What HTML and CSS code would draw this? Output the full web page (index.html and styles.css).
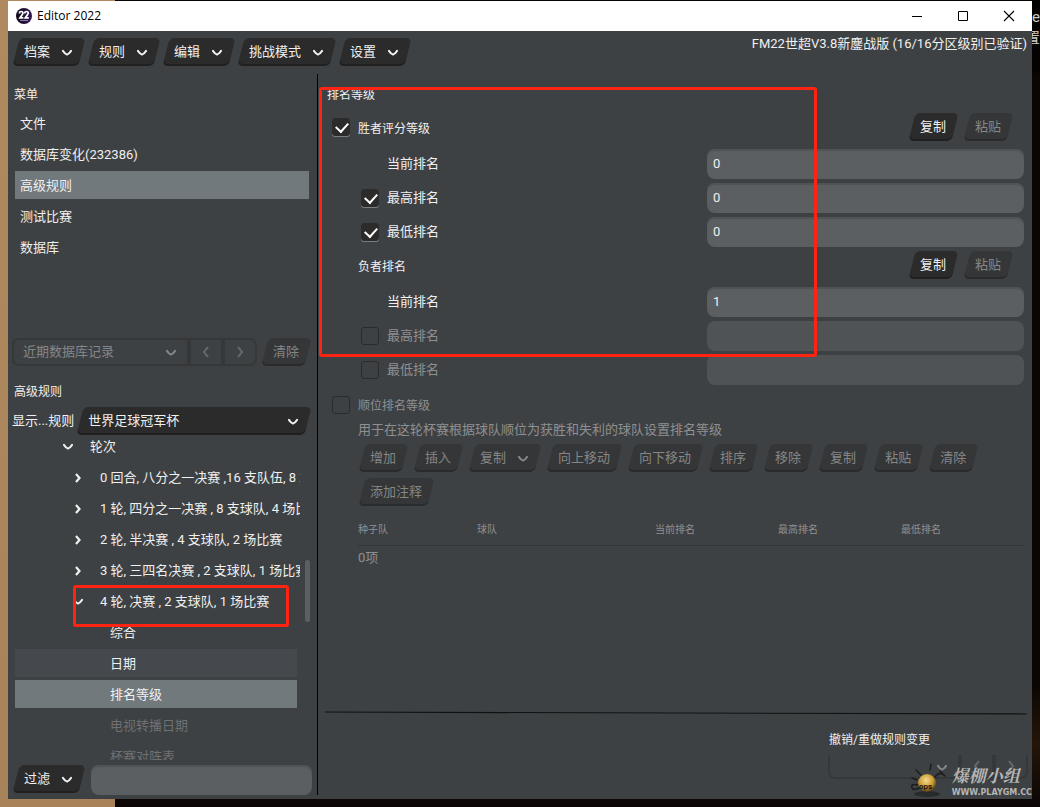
FILE: index.html
```html
<!DOCTYPE html>
<html lang="zh-CN">
<head>
<meta charset="utf-8">
<title>Editor 2022</title>
<link rel="stylesheet" href="styles.css">
</head>
<body>
<svg class="defs" aria-hidden="true">
  <symbol id="down" viewBox="0 0 12 12"><path d="M2 4 Q4 7 6 7.5 Q8 7 10 4" fill="none" stroke="currentColor" stroke-width="2.2" stroke-linecap="round"/></symbol>
  <symbol id="right" viewBox="0 0 12 12"><path d="M4 2 L7.5 6 L4 10" fill="none" stroke="currentColor" stroke-width="2.2"/></symbol>
  <symbol id="left" viewBox="0 0 12 12"><path d="M8 1 L4 6 L8 11" fill="none" stroke="currentColor" stroke-width="2"/></symbol>
  <symbol id="next" viewBox="0 0 12 12"><path d="M4 1 L8 6 L4 11" fill="none" stroke="currentColor" stroke-width="2"/></symbol>
</svg>
<div class="desktop">
  <span class="behind behind-a">e</span>
  <span class="behind behind-b">置</span>
  <div class="window">
    <header class="titlebar">
      <svg class="logo" viewBox="0 0 16 16"><defs><linearGradient id="lg"><stop offset="0" stop-color="#0c0914"/><stop offset="1" stop-color="#35185a"/></linearGradient></defs><circle cx="8" cy="8" r="8" fill="url(#lg)"/><path d="M3.500 5.500V4.500Q3.500 3.500 5.200 3.500T7 4.800Q7 6 4 9.800H7.300M8.800 5.500V4.500Q8.800 3.500 10.500 3.500T12.300 4.800Q12.300 6 9.300 9.800H12.800" fill="none" stroke="#fff" stroke-width="1.700"/><path d="M4 12.500H12" stroke="#8d7aa6" stroke-width="1"/></svg>
      <h1 class="app-name">Editor 2022</h1>
      <button class="win-btn" aria-label="最小化"><svg viewBox="0 0 12 12"><path d="M1 6.500H11" stroke="#000"/></svg></button>
      <button class="win-btn" aria-label="最大化"><svg viewBox="0 0 12 12"><path d="M1.500 1.500H10.500V10.500H1.500Z" fill="none" stroke="#000"/></svg></button>
      <button class="win-btn" aria-label="关闭"><svg viewBox="0 0 12 12"><path d="M1 1L11 11M11 1L1 11" stroke="#000" stroke-width="1.100"/></svg></button>
    </header>

    <nav class="menubar">
      <button class="btn">档案<svg class="chev"><use href="#down"/></svg></button>
      <button class="btn">规则<svg class="chev"><use href="#down"/></svg></button>
      <button class="btn">编辑<svg class="chev"><use href="#down"/></svg></button>
      <button class="btn">挑战模式<svg class="chev"><use href="#down"/></svg></button>
      <button class="btn">设置<svg class="chev"><use href="#down"/></svg></button>
      <span class="db-name">FM22世超V3.8新鏖战版 (16/16分区级别已验证)</span>
    </nav>

    <div class="main">
      <aside class="side">
        <h2 class="heading">菜单</h2>
        <ul class="menu">
          <li class="item">文件</li>
          <li class="item">数据库变化(232386)</li>
          <li class="item selected">高级规则</li>
          <li class="item">测试比赛</li>
          <li class="item">数据库</li>
        </ul>
        <div class="recent">
          <div class="group">
            <div class="group-select"><select disabled aria-label="近期数据库记录"><option>近期数据库记录</option></select><svg class="chev"><use href="#down"/></svg></div>
            <button class="step" disabled aria-label="后退"><svg class="chev"><use href="#left"/></svg></button>
            <button class="step" disabled aria-label="前进"><svg class="chev"><use href="#next"/></svg></button>
          </div>
          <button class="btn" disabled>清除</button>
        </div>
        <h2 class="heading">高级规则</h2>
        <div class="rule-row">
          <label for="rule">显示...规则</label>
          <div class="btn rule-select"><select id="rule"><option>世界足球冠军杯</option></select><svg class="chev"><use href="#down"/></svg></div>
        </div>
        <div class="tree-pane">
          <ul class="tree">
            <li class="node root"><svg class="chev"><use href="#down"/></svg>轮次</li>
            <li class="node round"><svg class="chev"><use href="#right"/></svg>0 回合, 八分之一决赛 ,16 支队伍, 8 场比赛</li>
            <li class="node round"><svg class="chev"><use href="#right"/></svg>1 轮, 四分之一决赛 , 8 支球队, 4 场比赛</li>
            <li class="node round"><svg class="chev"><use href="#right"/></svg>2 轮, 半决赛 , 4 支球队, 2 场比赛</li>
            <li class="node round"><svg class="chev"><use href="#right"/></svg>3 轮, 三四名决赛 , 2 支球队, 1 场比赛</li>
            <li class="node round"><svg class="chev"><use href="#down"/></svg>4 轮, 决赛 , 2 支球队, 1 场比赛</li>
            <li class="node leaf">综合</li>
            <li class="node leaf hover">日期</li>
            <li class="node leaf selected">排名等级</li>
            <li class="node leaf dim">电视转播日期</li>
            <li class="node leaf dim">杯赛对阵表</li>
          </ul>
          <div class="track"><div class="thumb"></div></div>
        </div>
        <div class="filter">
          <button class="btn">过滤<svg class="chev"><use href="#down"/></svg></button>
          <input class="field" type="text" aria-label="过滤">
        </div>
      </aside>

      <section class="content">
        <h2 class="heading">排名等级</h2>
        <div class="group-head">
          <input class="check" type="checkbox" id="win" checked><label class="small" for="win">胜者评分等级</label>
          <div class="actions"><button class="btn">复制</button><button class="btn" disabled>粘贴</button></div>
        </div>
        <div class="rows">
          <div class="row"><label for="w1">当前排名</label><input class="field" id="w1" type="text" value="0"></div>
          <div class="row"><input class="check" type="checkbox" id="wc2" checked><label for="wc2">最高排名</label><input class="field" type="text" value="0" aria-label="最高排名"></div>
          <div class="row"><input class="check" type="checkbox" id="wc3" checked><label for="wc3">最低排名</label><input class="field" type="text" value="0" aria-label="最低排名"></div>
        </div>
        <div class="group-head second">
          <span class="small">负者排名</span>
          <div class="actions"><button class="btn">复制</button><button class="btn" disabled>粘贴</button></div>
        </div>
        <div class="rows">
          <div class="row"><label for="l1">当前排名</label><input class="field" id="l1" type="text" value="1"></div>
          <div class="row off"><input class="check" type="checkbox" id="lc2"><label for="lc2">最高排名</label><input class="field" type="text" aria-label="最高排名" disabled></div>
          <div class="row off"><input class="check" type="checkbox" id="lc3"><label for="lc3">最低排名</label><input class="field" type="text" aria-label="最低排名" disabled></div>
        </div>
        <div class="order off">
          <div class="order-head"><input class="check" type="checkbox" id="seq"><label class="small" for="seq">顺位排名等级</label></div>
          <p class="note">用于在这轮杯赛根据球队顺位为获胜和失利的球队设置排名等级</p>
          <div class="tools">
            <button class="btn" disabled>增加</button>
            <button class="btn" disabled>插入</button>
            <button class="btn" disabled>复制<svg class="chev"><use href="#down"/></svg></button>
            <button class="btn" disabled>向上移动</button>
            <button class="btn" disabled>向下移动</button>
            <button class="btn" disabled>排序</button>
            <button class="btn" disabled>移除</button>
            <button class="btn" disabled>复制</button>
            <button class="btn" disabled>粘贴</button>
            <button class="btn" disabled>清除</button>
            <button class="btn" disabled>添加注释</button>
          </div>
          <table class="seeds">
            <thead><tr><th class="c-seed">种子队</th><th>球队</th><th class="c-rank">当前排名</th><th class="c-rank">最高排名</th><th class="c-rank">最低排名</th></tr></thead>
            <tbody><tr><td colspan="5">0项</td></tr></tbody>
          </table>
        </div>
        <footer class="undo">
          <svg class="rule" viewBox="0 0 702 4" preserveAspectRatio="none"><path d="M0 1L702 3" stroke="#111" stroke-width="1.200"/></svg>
          <div class="undo-box">
            <h2 class="small undo-title">撤销/重做规则变更</h2>
            <div class="group open">
              <div class="group-select"><select disabled aria-label="撤销/重做规则变更"><option></option></select><svg class="chev"><use href="#down"/></svg></div>
              <button class="step" disabled aria-label="撤销"><svg class="chev"><use href="#left"/></svg></button>
              <button class="step" disabled aria-label="重做"><svg class="chev"><use href="#next"/></svg></button>
            </div>
          </div>
        </footer>
      </section>
    </div>
  </div>
  <div class="mark mark-ranks"></div>
  <div class="mark mark-round"></div>
  <div class="stamp">
    <svg class="bomb" viewBox="0 0 38 36">
      <defs><radialGradient id="ball" cx=".45" cy=".35" r=".65"><stop offset="0" stop-color="#f7dc8c"/><stop offset=".6" stop-color="#c99a34"/><stop offset="1" stop-color="#4d3a15"/></radialGradient></defs>
      <ellipse cx="17" cy="31" rx="13" ry="3" fill="#1b1d1e" opacity=".6"/>
      <g stroke="#1c1c1c" stroke-width="1.500" stroke-linecap="round" fill="none"><path d="M6 7L11 12M20 7L21 1M2 15L7 17M25 14Q28 9 33 11M30 8L35 13M9 22Q0 20 2 25Q4 28 9 25"/></g>
      <circle cx="17" cy="20" r="9" fill="url(#ball)"/>
      <text class="bomb-text" x="9" y="26">ops</text>
    </svg>
    <div class="stamp-text"><span class="stamp-cn">爆棚小组</span><span class="stamp-url">WWW.PLAYGM.CC</span></div>
  </div>
</div>
</body>
</html>
```
FILE: styles.css
```css
* { box-sizing: border-box; }
body {
  margin: 0;
  font: 13px/20px Roboto, "Noto Sans CJK SC", sans-serif;
  color: #f0f0f0;
}
h1, h2, p, ul { margin: 0; padding: 0; font: inherit; list-style: none; }
button, select, input { font: inherit; color: inherit; }
.defs { position: absolute; width: 0; height: 0; }

.desktop {
  position: relative;
  height: 100vh;
  min-height: 760px;
  padding: 1px 8px 8px;
  overflow: hidden;
  background:
    linear-gradient(#b08a5e, #a8835a) left bottom / 115px 100% no-repeat,
    linear-gradient(#040302 0 70px, #0b0603 76px 85%, #241509 92%, #0b0505);
}
.behind { position: absolute; right: 0; width: 8px; overflow: hidden; color: #ccc; font-size: 15px; }
.behind-a { top: 7px; }
.behind-b { top: 28px; direction: rtl; }

.window {
  position: relative;
  display: flex;
  flex-direction: column;
  height: 100%;
  background: #3e4143;
}
.titlebar {
  display: flex;
  align-items: center;
  height: 30px;
  padding-left: 8px;
  background: #fff;
  color: #000;
}
.logo { width: 16px; height: 16px; margin-right: 5px; }
.app-name { flex: 1; font: 12px/20px "Open Sans", sans-serif; }
.win-btn { width: 46px; height: 30px; padding: 0; border: 0; background: none; }
.win-btn svg { display: block; width: 12px; height: 12px; margin: 0 auto; }

.menubar { display: flex; gap: 5px; padding: 7px 5px 8px 6px; }
.db-name { margin-left: auto; line-height: 12px; white-space: nowrap; }

.btn {
  position: relative;
  z-index: 0;
  display: flex;
  align-items: center;
  height: 28px;
  padding: 0 11px 1px 10px;
  border: 0;
  background: none;
  white-space: nowrap;
}
.btn::before {
  content: "";
  position: absolute;
  z-index: -1;
  inset: 0 2px;
  border-radius: 5px;
  background: #2b2b2b;
  box-shadow: inset 0 -2px #202020;
  transform: skewX(-14deg);
}
.btn:disabled { color: #858687; }
.btn:disabled::before { background: #353637; box-shadow: inset 0 -2px #2a2b2c; }
.chev { flex: none; width: 12px; height: 12px; }
.btn > .chev { margin: 2px 0 0 11px; }

.main { display: flex; flex: 1; min-height: 0; }
.side {
  display: flex;
  flex-direction: column;
  width: 310px;
  margin-bottom: 4px;
  padding-top: 10px;
  border-right: 1px solid #000;
}
.heading { padding: 1px 0 0 6px; font-size: 12px; }
.menu { display: grid; gap: 3px; padding: 4px 8px 0 7px; }
.item { height: 28px; padding: 1px 0 0 5px; line-height: 28px; }
.selected { background: #71797c; }
.recent { display: flex; gap: 6px; margin: 77px 7px 15px 4px; }
.group {
  display: flex;
  flex: 1;
  height: 28px;
  border: 2px solid #353738;
  border-radius: 7px;
  color: #858687;
}
.group-select { position: relative; display: flex; flex: 1; align-items: center; }
.group-select select { flex: 1; width: 0; padding: 0 0 1px 9px; }
.group-select .chev { position: absolute; right: 10px; top: 7px; }
select { height: 100%; border: 0; padding: 0; background: none; appearance: none; outline: 0; }
select:disabled { opacity: 1; color: #858687; }
.step { width: 34px; padding: 0; border: 0; border-left: 4px solid #353738; background: none; color: #68696a; }
.step .chev { display: block; margin: 0 auto; }

.rule-row { display: flex; align-items: center; gap: 4px; padding: 5px 7px 0 4px; }
.rule-row label { white-space: nowrap; }
.rule-select { flex: 1; }
.rule-select select { flex: 1; width: 0; }

.tree-pane { display: flex; flex: 1; min-height: 0; margin: 0 7px 5px; overflow: hidden; }
.tree { flex: 1; width: 0; overflow: hidden; }
.node {
  display: flex;
  align-items: center;
  height: 28px;
  margin: 0 3px 3px 0;
  padding-top: 1px;
  white-space: nowrap;
}
.root { height: 25px; padding: 0 0 2px 47px; gap: 16px; }
.round { padding-left: 57px; gap: 16px; }
.leaf { padding-left: 95px; }
.hover { background: #45484c; }
.dim { color: #6e7072; }
.track { width: 10px; padding: 125px 0 0 5px; }
.thumb { width: 5px; height: 62px; border-radius: 3px; background: #5c5f61; }
.filter { display: flex; gap: 7px; padding: 0 5px 0 6px; }

.field {
  flex: 1;
  width: 0;
  height: 30px;
  padding: 0 6px 2px;
  border: 0;
  border-radius: 8px;
  background: #5c5f61;
  box-shadow: inset 0 2px 1px #505355;
}
.field:disabled { background: #505355; box-shadow: none; }

.content { display: flex; flex: 1; flex-direction: column; min-width: 0; padding: 10px 8px 0 14px; }
.content > .heading { padding: 1px 0 0; margin-left: -5px; }
.small { font-size: 12px; }
.group-head { display: flex; align-items: center; gap: 8px; height: 28px; margin-top: 8px; }
.group-head .small { padding-top: 4px; }
.second { margin-top: 4px; padding-left: 26px; }
.actions { display: flex; gap: 8px; margin: 0 12px 0 auto; }
.check {
  flex: none;
  display: block;
  width: 18px;
  height: 18px;
  margin: 0;
  border: 1px solid #2b2b2b;
  border-radius: 3px;
  background: transparent;
  appearance: none;
}
.check:checked { background: #2b2b2b; box-shadow: 0 1px #7c7e7f; }
.check:checked::before {
  content: "";
  display: block;
  width: 6px;
  height: 10px;
  margin: 1px 0 0 5px;
  border: solid #fff;
  border-width: 0 2px 2px 0;
  transform: rotate(42deg);
}
.rows { display: grid; gap: 4px; margin-top: 8px; }
.row {
  display: grid;
  grid-template-columns: 18px minmax(0, 312fr) minmax(0, 317fr);
  align-items: center;
  column-gap: 8px;
  padding-left: 29px;
}
.row label { grid-column: 2; }
.row .field { width: 100%; }
.off { color: #8f9091; }

.order { padding: 9px 0 0; }
.order-head { display: flex; align-items: center; gap: 8px; }
.order-head .small { padding-top: 2px; }
.note { margin: 4px 0 4px 26px; }
.tools { display: flex; flex-wrap: wrap; gap: 6px 8px; padding-left: 28px; }
.seeds { width: calc(100% - 26px); margin: 11px 0 0 26px; border-collapse: collapse; table-layout: fixed; }
.seeds th { height: 28px; padding: 0 0 2px; border-bottom: 1px solid #333637; font-size: 10px; font-weight: 400; text-align: left; }
.seeds td { height: 26px; padding: 0; }
.c-seed { width: 119px; }
.c-rank { width: 123px; }

.undo { margin-top: auto; padding-bottom: 20px; }
.rule { display: block; width: calc(100% + 10px); height: 4px; margin-left: -7px; }
.undo-box { width: 200px; margin: 15px -4px 0 auto; }
.undo-title { padding-left: 1px; }
.open { height: 24px; margin-top: 5px; border-top: 0; border-radius: 0 0 7px 7px; }

.mark { position: absolute; border: 3px solid #ff2312; border-radius: 3px; }
.mark-ranks { left: 319px; top: 87px; width: 498px; height: 270px; }
.mark-round { left: 73px; top: 585px; width: 216px; height: 42px; }

.stamp { position: absolute; right: 8px; bottom: 8px; display: flex; align-items: flex-end; gap: 4px; color: #b5b6b6; }
.bomb { width: 38px; height: 36px; }
.bomb-text { font: bold 8px Roboto, sans-serif; fill: #111; }
.stamp-text { display: flex; flex-direction: column; }
.stamp-cn { font: italic bold 17px/24px "Noto Serif CJK SC", "Noto Sans CJK SC", serif; }
.stamp-url { font: bold 8px/12px "DejaVu Sans", sans-serif; }
```
